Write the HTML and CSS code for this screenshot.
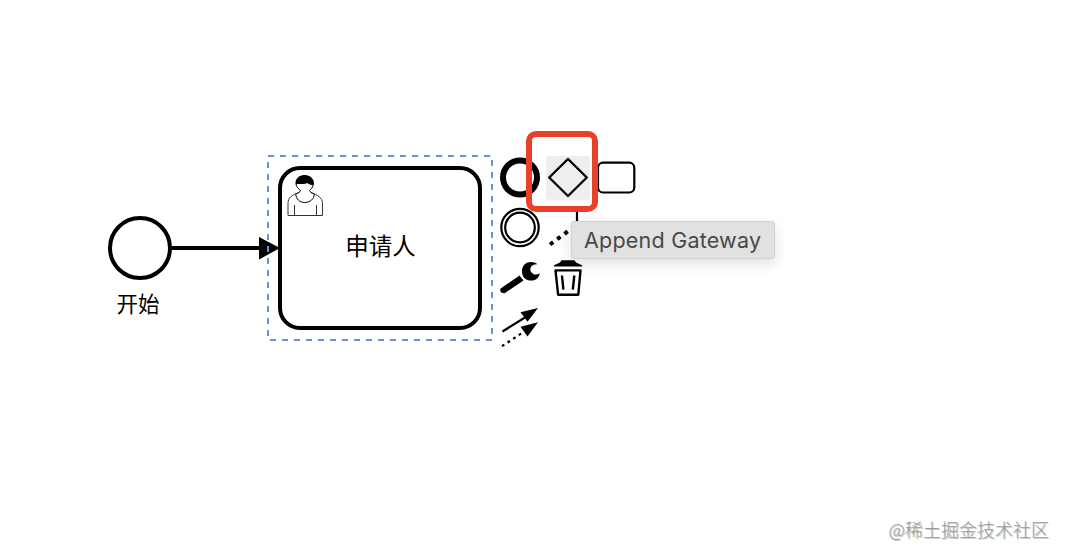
FILE: index.html
```html
<!DOCTYPE html>
<html lang="zh-CN">
<head>
<meta charset="utf-8">
<title>流程设计</title>
<link rel="stylesheet" href="styles.css">
</head>
<body>
<main class="canvas">
  <svg class="diagram" width="1066" height="558" viewBox="0 0 1066 558">
    <circle class="event" cx="140" cy="248" r="30"/>
    <text class="label" x="138" y="312">开始</text>
    <rect class="task" x="280" y="168" width="200" height="160" rx="20"/>
    <g class="user">
      <path class="user-body" d="M299 192.500c-7 2.500-11 5-11 11V215.500h34.500V203.500c0-6-5-8.500-11.500-11"/>
      <path class="user-body" d="M294.500 205v10M316.500 205v10"/>
      <path class="user-head" d="M300.500 190.500c-.5 2-2.500 2.500-4.700 3.500 0 5 4 8.500 9 8.500s9.500-3.500 9.500-8.500c-2.300-1-4.300-1.500-4.800-3.500 3.500-3 4.500-6 3.500-10-1-3-4-4.500-8.500-4.500s-7.500 2-8.300 5c-.8 4 .8 7 4.300 9.500z"/>
      <path d="M296 184.500c-.8-5.500 3-9.500 8.500-9.500s9.500 4 9 10c-3 0-4.500-.5-6-2-3.500 2-8 .2-11.500 1.500z"/>
    </g>
    <text class="label name" x="380.500" y="255">申请人</text>
    <path class="flow" d="M172 248h90"/>
    <path d="M259 237l21 11-21 11.500z"/>
    <rect class="selection" x="268" y="156" width="224" height="184"/>
  </svg>

  <div class="pad">
    <div class="entry"><svg viewBox="0 0 44 44"><circle class="line ring" cx="22" cy="21.500" r="17"/></svg></div>
    <div class="entry active"><svg viewBox="0 0 44 44"><path class="line diamond" d="M22 3L40.800 21.500 22 40 3.200 21.500z"/></svg></div>
    <div class="entry"><svg viewBox="0 0 44 44"><rect class="line" x="4" y="6.700" width="36.300" height="29.800" rx="5"/></svg></div>
    <div class="entry"><svg viewBox="0 0 44 44"><circle class="line" cx="22" cy="21.500" r="18.700"/><circle class="line" cx="22" cy="21.500" r="14.800"/></svg></div>
    <div class="entry"><svg viewBox="0 0 44 44"><path class="line dots" d="M4 38.500L31 18.500"/><path class="line" d="M31 0v16h9"/></svg></div>
    <div class="entry"></div>
    <div class="entry"><svg viewBox="0 0 44 44"><path class="handle" d="M2.700 32.500L21.500 19.500 25.500 24.500 7 37C4 38 1 35 2.700 32.500z"/><path d="M39.500 8.300C34 3.800 24 6 24 15.200 24 21.500 28 24.600 33.200 24.600 38 24.600 41.300 21.600 41.800 17.200 40 18.600 38 19 35.800 18.200 30.500 16 31 8 39.500 8.300z"/></svg></div>
    <div class="entry"><svg viewBox="0 0 44 44"><path d="M15.500 4.300h13l1.500 2.300 6 2.700v1.300H8v-1.300l6-2.700z"/><path class="line can" d="M9.500 14.400h25l-2.200 24.300h-20.200zM16 19.500l1.400 14.200M28.300 19.500l-1.500 14.200"/></svg></div>
    <div class="entry"></div>
    <div class="entry"><svg viewBox="0 0 44 44"><path class="line" d="M4.500 25.500L27 11.500"/><path d="M40 2L22.500 6.200 29.500 15.800z"/><path class="line dash" d="M4 40.200L27 25"/><path d="M40 16.300L22.500 20.700 29.500 30.500z"/></svg></div>
  </div>
  <div class="marker"></div>
  <div class="tooltip">Append Gateway</div>
  <div class="watermark">@稀土掘金技术社区</div>
</main>
</body>
</html>
```
FILE: styles.css
```css
body {
  margin: 0;
  background: #fff;
}
.canvas {
  position: relative;
  width: 1066px;
  height: 558px;
  overflow: hidden;
}
.diagram {
  display: block;
}
.event,
.task {
  fill: #fff;
  stroke: #000;
  stroke-width: 4;
}
.flow {
  stroke: #000;
  stroke-width: 4;
}
.label {
  font: 21.5px "Noto Sans CJK SC", sans-serif;
  text-anchor: middle;
}
.name {
  font-size: 23.5px;
}
.user-body,
.user-head {
  fill: #fff;
  stroke: #000;
  stroke-width: 1;
}
.user-body {
  stroke: #333;
}
.selection {
  fill: none;
  stroke: #6a92d4;
  stroke-width: 2;
  stroke-dasharray: 6 6;
}
.pad {
  position: absolute;
  left: 498px;
  top: 156px;
  display: grid;
  grid-template-columns: repeat(3, 44px);
  grid-auto-rows: 44px;
  gap: 6px 4px;
}
.entry {
  border-radius: 4px;
}
.entry svg {
  display: block;
  width: 44px;
  height: 44px;
}
.active {
  background: #eee;
}
.line {
  fill: none;
  stroke: #000;
  stroke-width: 2.2;
  stroke-linejoin: round;
}
.ring {
  stroke-width: 6;
}
.diamond,
.can {
  stroke-width: 2.4;
}
.dots {
  stroke-width: 4;
  stroke-dasharray: 4 5;
}
.dash {
  stroke-dasharray: 2.8 3.900;
}
.marker {
  position: absolute;
  left: 526px;
  top: 131px;
  width: 60px;
  height: 69px;
  border: 6px solid #e9402a;
  border-radius: 10px;
}
.tooltip {
  position: absolute;
  left: 571px;
  top: 221px;
  box-sizing: border-box;
  width: 204px;
  height: 38px;
  padding-left: 12px;
  border: 1px solid #d2d2d2;
  border-radius: 3px;
  background: #e1e1e1;
  box-shadow: 0 5px 14px rgba(0, 0, 0, .13);
  color: #484848;
  font: 21.5px/37px Inter, sans-serif;
  letter-spacing: .22px;
  white-space: nowrap;
}
.watermark {
  position: absolute;
  right: 17px;
  bottom: 16px;
  color: #999;
  font: 300 18px/26px "Noto Sans CJK SC", sans-serif;
  text-shadow: 1px 1px 0 #ccc;
  white-space: nowrap;
}
```
